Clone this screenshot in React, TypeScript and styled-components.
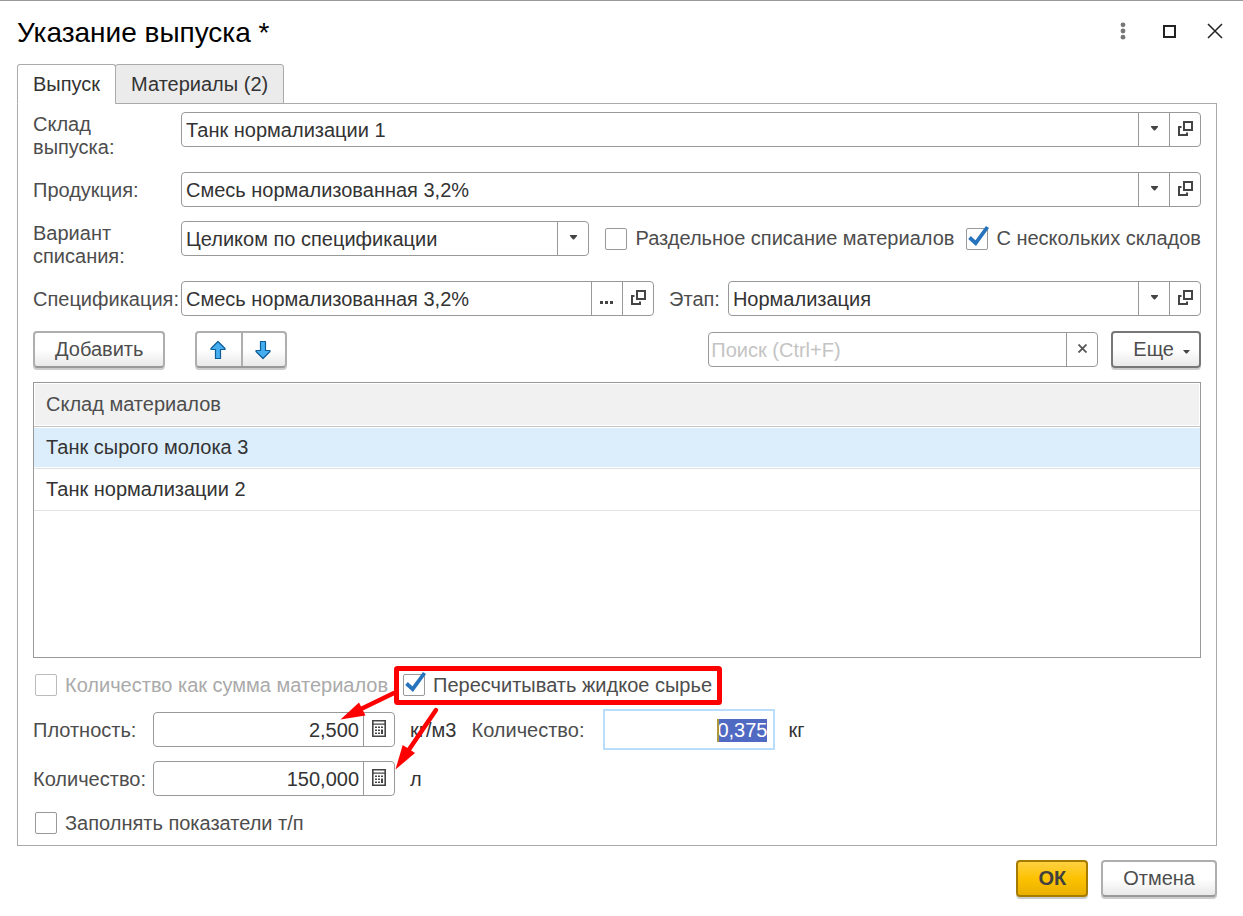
import React, { useEffect, useRef } from "react";
import styled, { createGlobalStyle, css } from "styled-components";

const GlobalStyle = createGlobalStyle`
  *, *::before, *::after { box-sizing: border-box; }
  body {
    margin: 0;
    background: #fff;
    color: #4d4d4d;
    font-family: "Liberation Sans", Arial, sans-serif;
    font-size: 20px;
    line-height: 23px;
  }
  button, input, select { font: inherit; color: inherit; margin: 0; }
  button { cursor: pointer; }
`;

const Window = styled.main`
  border-top: 1px solid #999;
`;

const TitleBar = styled.header`
  display: flex;
  align-items: center;
  justify-content: space-between;
  height: 63px;
  padding: 0 5px 0 17px;
`;

const Title = styled.h1`
  margin: 0;
  font-size: 28px;
  line-height: 32px;
  font-weight: 400;
  color: #000;
`;

const WindowButtons = styled.div`
  display: flex;
  padding-bottom: 3px;
`;

const WindowButton = styled.button`
  display: grid;
  place-items: center;
  width: 46px;
  height: 40px;
  padding: 0;
  border: 0;
  background: none;
`;

const Body = styled.div`
  padding: 0 26px 0 17px;
`;

const Tabs = styled.div`
  display: flex;
  margin-bottom: -1px;
`;

const Tab = styled.button<{ $active?: boolean }>`
  position: relative;
  height: 40px;
  padding: 0 15px;
  border: 1px solid #aaa;
  border-radius: 3px 3px 0 0;
  background: #ebebeb;
  color: #333;
  & + & { margin-left: -1px; }
  ${(p) =>
    p.$active &&
    css`
      background: #fff;
      border-bottom-color: #fff;
    `}
`;

const Panel = styled.section`
  border: 1px solid #aaa;
  padding: 8px 15px 11px;
`;

const Rows = styled.div`
  display: flex;
  flex-direction: column;
  gap: 14px;
`;

const Row = styled.div`
  display: flex;
  align-items: flex-start;
`;

const Label = styled.label<{ $width?: number; $inline?: boolean }>`
  flex: none;
  width: ${(p) => (p.$width ? `${p.$width}px` : "auto")};
  height: 35px;
  padding: ${(p) => (p.$inline ? "0 8px 0 15px" : "0")};
  line-height: 37px;
  white-space: nowrap;
`;

const TallLabel = styled.label`
  flex: none;
  width: 148px;
  height: 46px;
  padding: 1px 40px 0 0;
`;

const Unit = styled.span`
  height: 35px;
  padding: 0 15px;
  line-height: 37px;
  color: #333;
`;

const Field = styled.div<{ $width?: number }>`
  display: flex;
  flex: ${(p) => (p.$width ? `none` : "1 1 0")};
  width: ${(p) => (p.$width ? `${p.$width}px` : "auto")};
  min-width: 0;
  height: 35px;
  border: 1px solid #999;
  border-radius: 4px;
  background: #fff;
  overflow: hidden;
`;

const controlText = css`
  flex: 1;
  min-width: 0;
  width: 100%;
  height: 100%;
  padding: 2px 4px 0;
  border: 0;
  border-radius: 0;
  outline: 0;
  background: transparent;
  color: #333;
  appearance: none;
`;

const TextInput = styled.input<{ $right?: boolean }>`
  ${controlText}
  text-align: ${(p) => (p.$right ? "right" : "left")};
`;

const SearchInput = styled.input`
  ${controlText}
  padding: 2px 2px 0;
  &::placeholder { color: #c4c4c4; opacity: 1; }
  &::-webkit-search-cancel-button { display: none; }
`;

const SelectArea = styled.div`
  flex: 1;
  min-width: 0;
  display: grid;
  grid-template: 100% / 1fr 31px;
`;

const Select = styled.select`
  ${controlText}
  grid-area: 1 / 1 / 2 / 3;
`;

const cell = css`
  display: grid;
  place-items: center;
  flex: none;
  width: 31px;
  height: 100%;
  padding: 0 0 2px;
  border: 0;
  border-left: 1px solid #999;
  background: none;
`;

const CaretCell = styled.span`
  ${cell}
  grid-area: 1 / 2 / 2 / 3;
  pointer-events: none;
`;

const CellButton = styled.button`
  ${cell}
`;

const CheckLabel = styled.label<{ $disabled?: boolean }>`
  display: inline-flex;
  align-items: center;
  gap: 8px;
  white-space: nowrap;
  color: ${(p) => (p.$disabled ? "#aaa" : "#4d4d4d")};
`;

const CheckBoxArea = styled.span`
  display: grid;
  width: 22px;
  height: 22px;
  & > * { grid-area: 1 / 1; }
`;

const CheckInput = styled.input`
  appearance: none;
  width: 22px;
  height: 22px;
  border: 1px solid #999;
  border-radius: 2px;
  background: #fff;
  &:disabled { border-color: #bbb; }
  & + svg { visibility: hidden; }
  &:checked + svg { visibility: visible; }
`;

const TickSvg = styled.svg`
  overflow: visible;
  pointer-events: none;
`;

const Options = styled.div`
  display: flex;
  gap: 12px;
  height: 35px;
  margin-left: 16px;
`;

const Toolbar = styled.div`
  display: flex;
  align-items: center;
  margin: 15px 0 14px;
`;

const pushButton = css`
  height: 37px;
  border: 2px solid #aeaeae;
  border-bottom-color: #999;
  border-radius: 4px;
  background: linear-gradient(#fff 50%, #e9e9e9);
  box-shadow: 0 2px 0 #ccc;
  color: #4d4d4d;
`;

const PushButton = styled.button<{ $kind?: "strong" | "primary" }>`
  ${pushButton}
  padding: 0 20px;
  ${(p) =>
    p.$kind === "strong" &&
    css`
      display: flex;
      align-items: center;
      gap: 9px;
      padding: 0 9px 0 20px;
      border-color: #777;
      & svg { margin-top: 4px; }
    `}
  ${(p) =>
    p.$kind === "primary" &&
    css`
      border-color: #a67c00;
      background: linear-gradient(#ffd042, #fcc200 50%, #e9b000);
      font-weight: 700;
      color: #404040;
    `}
`;

const ButtonGroup = styled.div`
  ${pushButton}
  display: flex;
  margin: 0 auto 0 30px;
`;

const GroupButton = styled.button`
  display: grid;
  place-items: center;
  width: 44px;
  padding: 0;
  border: 0;
  background: none;
  & + & { border-left: 2px solid #aeaeae; }
`;

const SearchSlot = styled.div`
  display: flex;
  flex: 0 1 390px;
  margin-right: 13px;
`;

const TableFrame = styled.div`
  min-height: 276px;
  border: 1px solid #999;
`;

const Table = styled.table`
  width: 100%;
  border-collapse: collapse;
  text-align: left;
`;

const HeadCell = styled.th`
  height: 43px;
  padding: 0 12px;
  border-bottom: 1px solid #c4c4c4;
  background: #f1f1f1;
  box-shadow: inset 0 0 0 1px #fff;
  font-weight: 400;
`;

const Cell = styled.td<{ $selected?: boolean }>`
  height: 42px;
  padding: 0 12px;
  border-bottom: 1px solid #e2e2e2;
  background: ${(p) => (p.$selected ? "#dceefc" : "#fff")};
  box-shadow: ${(p) => (p.$selected ? "inset 0 1px 0 #fff, inset 0 -1px 0 #fff" : "none")};
  color: #333;
`;

const CheckRow = styled.div`
  display: flex;
  align-items: center;
  gap: 15px;
  height: 22px;
  margin: 16px 2px;
  &:last-child { margin-bottom: 0; }
`;

const Highlighted = styled.div`
  position: relative;
  display: flex;
`;

const Annotation = styled.svg`
  position: absolute;
  left: -73px;
  top: -14px;
  z-index: 1;
  pointer-events: none;
`;

const ActiveField = styled.div`
  position: relative;
  width: 172px;
  height: 41px;
  margin: -3px -2px -3px 0;
  border: 2px solid #b9ddfa;
  background: #fff;
`;

const ActiveInput = styled(TextInput)`
  padding: 2px 6px 0;
  caret-color: transparent;
  &::selection { background: #5069c3; color: #fff; }
`;

const TextCursor = styled.span`
  position: absolute;
  top: 8px;
  right: 54px;
  width: 2px;
  height: 23px;
  background: #ae963c;
`;

const Footer = styled.footer`
  display: flex;
  justify-content: flex-end;
  gap: 13px;
  padding: 14px 0 18px;
`;

const Caret = () => (
  <svg width="7" height="5" viewBox="0 0 7 5" aria-hidden="true">
    <path d="M0 0h7v1L4 4.600h-1L0 1z" fill="#444" />
  </svg>
);

const SmallCaret = () => (
  <svg width="7" height="4" viewBox="0 0 7 4" aria-hidden="true">
    <path d="M0 0h7L4 3.500h-1z" fill="#444" />
  </svg>
);

const OpenIcon = () => (
  <svg width="15" height="15" viewBox="0 0 15 15" fill="none" stroke="#444" strokeWidth="2" aria-hidden="true">
    <path d="M6 1h8v8H6z" />
    <path d="M3.500 6H1v8h8v-2.500" />
  </svg>
);

const CalcIcon = () => (
  <svg width="14" height="17" viewBox="0 0 14 17" aria-hidden="true">
    <path d="M.8 .8h12.400v15.400H.8z" fill="none" stroke="#444" strokeWidth="1.600" />
    <path d="M1 3.400h12v1.300H1z" fill="#444" />
    <path
      d="M3 6.500h2v1.600H3zM6 6.500h2v1.600H6zM9 6.500h2v1.600H9zM3 9.500h2v1.600H3zM6 9.500h2v1.600H6zM9 9.500h2v4.600H9zM3 12.500h2v1.600H3zM6 12.500h2v1.600H6z"
      fill="#444"
    />
  </svg>
);

const DotsIcon = () => (
  <svg width="6" height="18" viewBox="0 0 6 18" fill="#777" aria-hidden="true">
    <circle cx="3" cy="2.800" r="2.400" />
    <circle cx="3" cy="9" r="2.400" />
    <circle cx="3" cy="15.200" r="2.400" />
  </svg>
);

const MoveArrow = ({ down }: { down?: boolean }) => (
  <svg width="18" height="20" viewBox="1 0 18 20" aria-hidden="true">
    <path
      d={down ? "M6.500 1.500h5v9h4.500v1L9 18.500 2 11.500v-1h4.500z" : "M6.500 18.500h5v-9H16v-1L9 1.500 2 8.500v1h4.500z"}
      fill="#45aef0"
      stroke="#0e5c96"
      strokeWidth="1.200"
      strokeLinejoin="round"
    />
  </svg>
);

type CheckProps = { text: string; checked?: boolean; disabled?: boolean };

const Check = ({ text, checked, disabled }: CheckProps) => (
  <CheckLabel $disabled={disabled}>
    <CheckBoxArea>
      <CheckInput type="checkbox" defaultChecked={checked} disabled={disabled} />
      <TickSvg width="22" height="22" viewBox="0 0 22 22" aria-hidden="true">
        <path d="M3.500 9.500L9.700 15.200L21.500 -1" fill="none" stroke="#2773bd" strokeWidth="3.800" />
      </TickSvg>
    </CheckBoxArea>
    {text}
  </CheckLabel>
);

type SelectFieldProps = { id: string; value: string; open?: boolean };

const SelectField = ({ id, value, open }: SelectFieldProps) => (
  <Field>
    <SelectArea>
      <Select id={id} defaultValue={value}>
        <option>{value}</option>
      </Select>
      <CaretCell>
        <Caret />
      </CaretCell>
    </SelectArea>
    {open && (
      <CellButton type="button" aria-label="Открыть">
        <OpenIcon />
      </CellButton>
    )}
  </Field>
);

const NumberField = ({ id, value }: { id: string; value: string }) => (
  <Field $width={242}>
    <TextInput id={id} defaultValue={value} $right />
    <CellButton type="button" aria-label="Калькулятор">
      <CalcIcon />
    </CellButton>
  </Field>
);

export default function App() {
  const massRef = useRef<HTMLInputElement>(null);

  useEffect(() => {
    massRef.current?.focus();
    massRef.current?.select();
  }, []);

  return (
    <Window>
      <GlobalStyle />
      <TitleBar>
        <Title>Указание выпуска *</Title>
        <WindowButtons>
          <WindowButton type="button" aria-label="Меню">
            <DotsIcon />
          </WindowButton>
          <WindowButton type="button" aria-label="Развернуть">
            <svg width="13" height="13" viewBox="0 0 13 13" aria-hidden="true">
              <path d="M1 1h11v11H1z" fill="none" stroke="#222" strokeWidth="2" />
            </svg>
          </WindowButton>
          <WindowButton type="button" aria-label="Закрыть">
            <svg width="16" height="16" viewBox="0 0 16 16" aria-hidden="true">
              <path d="M1 1l14 14M15 1L1 15" fill="none" stroke="#222" strokeWidth="1.500" />
            </svg>
          </WindowButton>
        </WindowButtons>
      </TitleBar>

      <Body>
        <Tabs role="tablist">
          <Tab type="button" role="tab" aria-selected="true" $active>
            Выпуск
          </Tab>
          <Tab type="button" role="tab" aria-selected="false">
            Материалы (2)
          </Tab>
        </Tabs>

        <Panel>
          <Rows>
            <Row>
              <TallLabel htmlFor="store">Склад выпуска:</TallLabel>
              <SelectField id="store" value="Танк нормализации 1" open />
            </Row>
            <Row>
              <Label htmlFor="product" $width={148}>
                Продукция:
              </Label>
              <SelectField id="product" value="Смесь нормализованная 3,2%" open />
            </Row>
            <Row>
              <TallLabel htmlFor="variant">Вариант списания:</TallLabel>
              <SelectField id="variant" value="Целиком по спецификации" />
              <Options>
                <Check text="Раздельное списание материалов" />
                <Check text="С нескольких складов" checked />
              </Options>
            </Row>
            <Row>
              <Label htmlFor="spec" $width={148}>
                Спецификация:
              </Label>
              <Field>
                <TextInput id="spec" defaultValue="Смесь нормализованная 3,2%" />
                <CellButton type="button" aria-label="Выбрать">
                  <svg width="14" height="12" viewBox="0 0 14 12" fill="#444" aria-hidden="true">
                    <path d="M0 9h3v3H0zM5 9h3v3H5zM10 9h3v3h-3z" />
                  </svg>
                </CellButton>
                <CellButton type="button" aria-label="Открыть">
                  <OpenIcon />
                </CellButton>
              </Field>
              <Label htmlFor="stage" $inline>
                Этап:
              </Label>
              <SelectField id="stage" value="Нормализация" open />
            </Row>
          </Rows>

          <Toolbar>
            <PushButton type="button">Добавить</PushButton>
            <ButtonGroup>
              <GroupButton type="button" aria-label="Переместить вверх">
                <MoveArrow />
              </GroupButton>
              <GroupButton type="button" aria-label="Переместить вниз">
                <MoveArrow down />
              </GroupButton>
            </ButtonGroup>
            <SearchSlot>
              <Field>
                <SearchInput type="search" aria-label="Поиск" placeholder="Поиск (Ctrl+F)" />
                <CellButton type="button" aria-label="Очистить">
                  <svg width="9" height="9" viewBox="0 0 9 9" aria-hidden="true">
                    <path d="M.5 .5l8 8M8.500 .5l-8 8" fill="none" stroke="#555" strokeWidth="1.800" />
                  </svg>
                </CellButton>
              </Field>
            </SearchSlot>
            <PushButton type="button" $kind="strong">
              Еще
              <SmallCaret />
            </PushButton>
          </Toolbar>

          <TableFrame>
            <Table>
              <thead>
                <tr>
                  <HeadCell scope="col">Склад материалов</HeadCell>
                </tr>
              </thead>
              <tbody>
                <tr>
                  <Cell $selected>Танк сырого молока 3</Cell>
                </tr>
                <tr>
                  <Cell>Танк нормализации 2</Cell>
                </tr>
              </tbody>
            </Table>
          </TableFrame>

          <CheckRow>
            <Check text="Количество как сумма материалов" disabled />
            <Highlighted>
              <Check text="Пересчитывать жидкое сырье" checked />
              <Annotation width="400" height="120" viewBox="330 660 400 120" aria-hidden="true">
                <rect x="396.500" y="668.500" width="323" height="34" rx="1" fill="none" stroke="#f00" strokeWidth="5" />
                <path d="M394 693L361 709M436 710L408 751" stroke="#f00" strokeWidth="4.500" strokeLinecap="round" />
                <path d="M340.500 719.500L359 702.500L362 708.500L365.500 715.500z" fill="#f00" />
                <path d="M395.500 769.500L402.700 745L409 749L415 753z" fill="#f00" />
              </Annotation>
            </Highlighted>
          </CheckRow>

          <Rows>
            <Row>
              <Label htmlFor="density" $width={120}>
                Плотность:
              </Label>
              <NumberField id="density" value="2,500" />
              <Unit>кг/м3</Unit>
              <Label htmlFor="mass" $width={132}>
                Количество:
              </Label>
              <ActiveField>
                <ActiveInput id="mass" ref={massRef} defaultValue="0,375" $right />
                <TextCursor />
              </ActiveField>
              <Unit>кг</Unit>
            </Row>
            <Row>
              <Label htmlFor="volume" $width={120}>
                Количество:
              </Label>
              <NumberField id="volume" value="150,000" />
              <Unit>л</Unit>
            </Row>
          </Rows>

          <CheckRow>
            <Check text="Заполнять показатели т/п" />
          </CheckRow>
        </Panel>

        <Footer>
          <PushButton type="button" $kind="primary">
            ОК
          </PushButton>
          <PushButton type="button">Отмена</PushButton>
        </Footer>
      </Body>
    </Window>
  );
}
